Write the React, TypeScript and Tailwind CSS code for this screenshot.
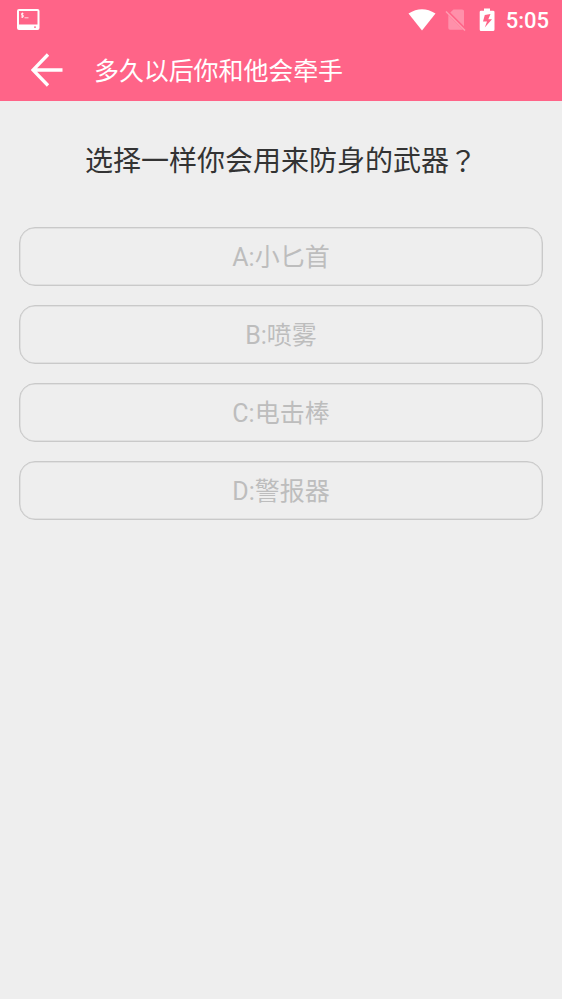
const options = ["A:小匕首", "B:喷雾", "C:电击棒", "D:警报器"];

function StatusBar() {
  return (
    <div className="flex h-10 items-center pl-[17px] pr-[13px]">
      <svg width="23" height="22" viewBox="0 0 23 22" className="shrink-0">
        <path fill="#fff" fillRule="evenodd" d="M2 0H20.500Q22.500 0 22.500 2V19Q22.500 21 20.500 21H2Q0 21 0 19V2Q0 0 2 0ZM2 2V15.500H20.500V2ZM17 17.500V18.800H19V17.500Z" />
        <path d="M6.500 4.500H4.500V6.200H6.300V8H4M5.400 3.500V9M7.500 8.800H11.500" fill="none" stroke="#fff" strokeOpacity="0.85" strokeWidth="0.900" />
      </svg>
      <div className="ml-auto flex items-center">
        <svg width="28" height="22" viewBox="0 0 28 22"><path fill="#fff" d="M0.500 4.500Q14-4 27.500 4.500L14 21.500Z" /></svg>
        <svg width="22" height="24" viewBox="0 0 22 24" className="ml-[9px]">
          <path fill="#ff90aa" d="M8.500 1.500H17Q19 1.500 19 3V18.200L5.300 4.500ZM3.300 7L18 21.700H5Q3.300 21.700 3.300 20Z" />
          <path d="M1 3.500L20 22.500" stroke="#ff9db2" strokeWidth="1.500" />
        </svg>
        <svg width="16" height="24" viewBox="0 0 16 24" className="ml-3">
          <path fill="#fff" fillRule="evenodd" d="M5 0.500H11V2.700H14Q15.500 2.700 15.500 4V21.500Q15.500 23 14 23H2Q0.700 23 0.700 21.500V4Q0.700 2.700 2 2.700H5ZM11.500 6L5.800 7L4 13.500H8L5.800 19.500L13 11.300H9.300Z" />
        </svg>
        <span className="ml-[11px] pt-[2px] text-[22px] leading-none font-medium">5:05</span>
      </div>
    </div>
  );
}

export default function App() {
  return (
    <div className="h-[999px] w-[562px] bg-[#eeeeee] font-[Roboto,'Noto_Sans_CJK_SC',sans-serif]">
      <header className="h-[101px] bg-[#ff6488] text-white">
        <StatusBar />
        <div className="flex h-[61px] items-center pl-[31px]">
          <svg width="32" height="34" viewBox="0 0 32 34" fill="none" stroke="#fff" strokeWidth="3.300" className="mb-[2px]"><path d="M17 1.500L2 17L17 32.500M2 17H31.500" /></svg>
          <h1 className="ml-[31px] pt-px text-[25px] leading-none tracking-[-0.1px]">多久以后你和他会牵手</h1>
        </div>
      </header>
      <main className="px-[19px]">
        <h2 className="flex h-[126px] items-center justify-center pb-[4px] text-[28px] leading-none text-[#333]">选择一样你会用来防身的武器<span lang="zh-TW" className="pb-[5px] font-['Noto_Sans_CJK_TC',sans-serif]">？</span></h2>
        <div className="flex flex-col gap-[19px]">
          {options.map((option) => (
            <button key={option} className="h-[59px] rounded-[16px] border border-[#c9c9c9] pt-[2px] text-[25px] leading-none text-[#bdbdbd] shadow-[inset_0_0_0_0.5px_#d2d2d2]">{option}</button>
          ))}
        </div>
      </main>
    </div>
  );
}
